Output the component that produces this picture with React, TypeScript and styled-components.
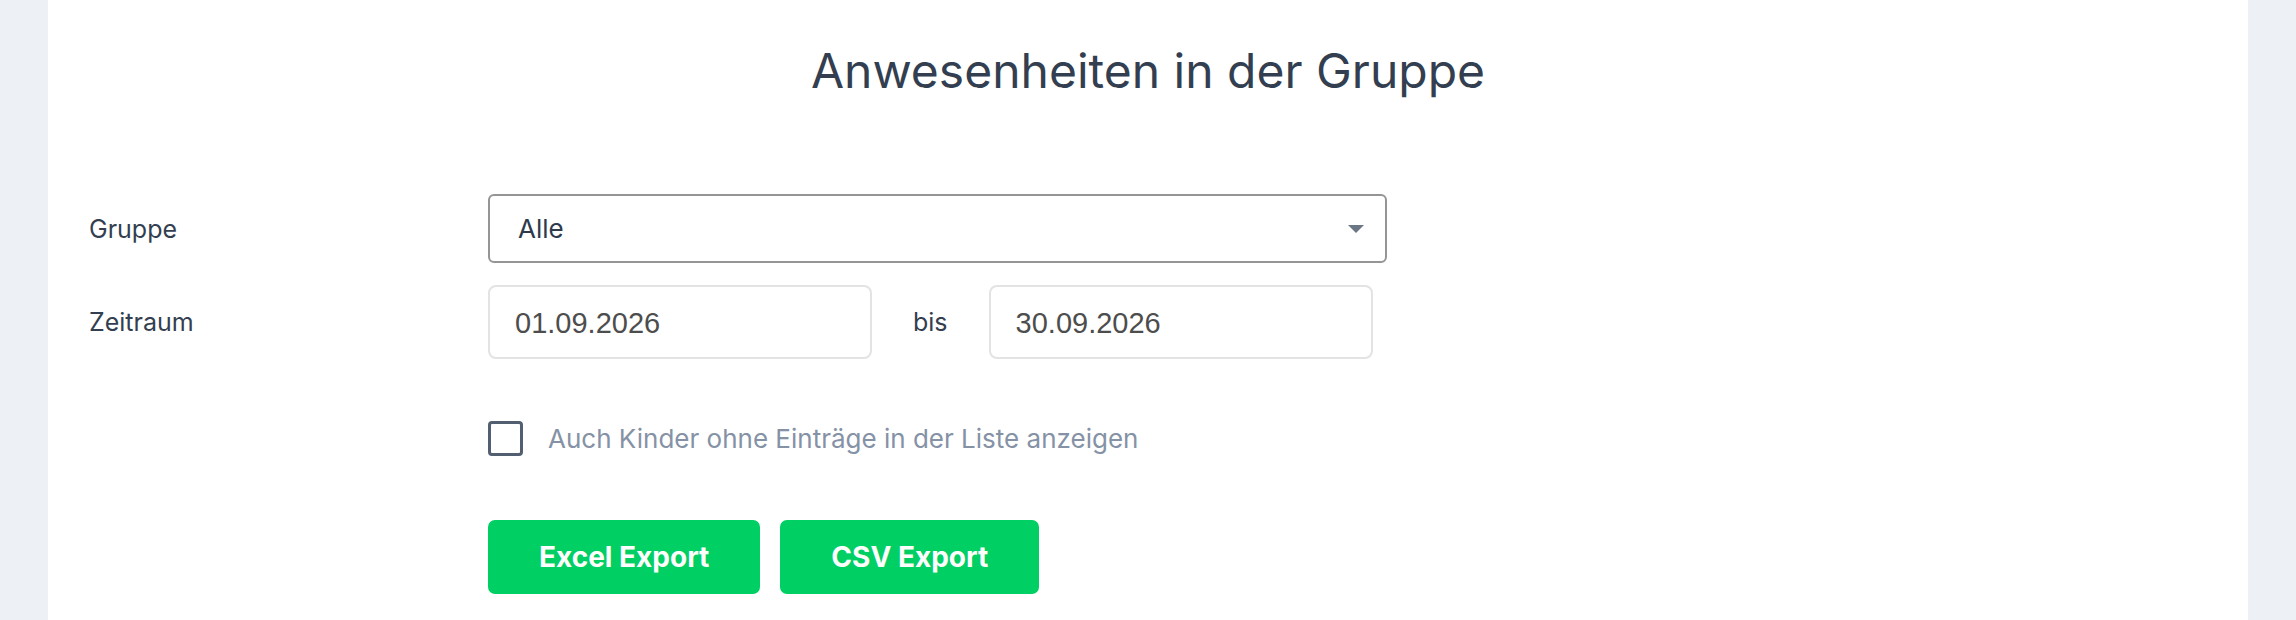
import React, { useState } from 'react';
import styled, { createGlobalStyle } from 'styled-components';

const GlobalStyle = createGlobalStyle`
  html, body {
    margin: 0;
    padding: 0;
    background: #edf0f5;
    font-family: 'Inter', 'Noto Sans', sans-serif;
    overflow: hidden;
  }
`;

const Page = styled.div`
  padding: 0 48px;
  height: 620px;
  overflow: hidden;
`;

const Card = styled.div`
  background: #ffffff;
  border-radius: 0 0 8px 8px;
  min-height: 700px;
  padding: 41px 41px 0;
  box-sizing: border-box;
`;

const Title = styled.h1`
  margin: 0 0 94px;
  text-align: center;
  font-size: 48px;
  font-weight: 400;
  color: #333f50;
  line-height: normal;
`;

const Form = styled.div`
  display: grid;
  grid-template-columns: 399px 1fr;
  align-items: center;
  row-gap: 22px;
`;

const Label = styled.div`
  font-size: 25px;
  color: #333f50;
`;

const SelectBox = styled.div`
  position: relative;
  width: 899px;
  height: 69px;
  box-sizing: border-box;
  border: 2px solid #959595;
  border-radius: 6px;
  display: flex;
  align-items: center;
  padding: 0 28px;
  font-size: 26px;
  color: #2d3a4d;
`;

const Caret = styled.span`
  position: absolute;
  right: 21px;
  top: 50%;
  margin-top: -4px;
  width: 0;
  height: 0;
  border-left: 8px solid transparent;
  border-right: 8px solid transparent;
  border-top: 8px solid #6b7785;
`;

const DateRow = styled.div`
  display: flex;
  align-items: center;
  gap: 41px;
`;

const DateInput = styled.input`
  width: 384px;
  height: 74px;
  box-sizing: border-box;
  border: 2px solid #e3e3e3;
  border-radius: 8px;
  padding: 2px 25px 0;
  font-family: 'Liberation Sans', Arial, sans-serif;
  font-size: 29px;
  color: #4d4d4d;
  outline: none;
  background: #fff;
`;

const Bis = styled.span`
  font-size: 25px;
  color: #333f50;
`;

const CheckRow = styled.label`
  display: flex;
  align-items: center;
  gap: 25px;
  margin-top: 40px;
  cursor: pointer;
`;

const Box = styled.span<{ $checked: boolean }>`
  width: 35px;
  height: 35px;
  box-sizing: border-box;
  border: 3px solid #525f70;
  border-radius: 4px;
  background: ${(p) => (p.$checked ? '#525f70' : '#fff')};
`;

const CheckText = styled.span`
  font-size: 26px;
  color: #8592a6;
`;

const Buttons = styled.div`
  display: flex;
  gap: 20px;
  margin-top: 42px;
`;

const ExportButton = styled.button`
  height: 74px;
  padding: 0 51px;
  border: none;
  border-radius: 7px;
  background: #00cf63;
  color: #ffffff;
  font-family: 'Inter', sans-serif;
  font-size: 28px;
  font-weight: 700;
  cursor: pointer;
`;

const App: React.FC = () => {
  const [showEmpty, setShowEmpty] = useState<boolean>(false);
  const [from, setFrom] = useState('01.09.2026');
  const [to, setTo] = useState('30.09.2026');

  return (
    <Page>
      <GlobalStyle />
      <Card>
        <Title>Anwesenheiten in der Gruppe</Title>
        <Form>
          <Label>Gruppe</Label>
          <SelectBox>
            Alle
            <Caret />
          </SelectBox>

          <Label>Zeitraum</Label>
          <DateRow>
            <DateInput value={from} onChange={(e) => setFrom(e.target.value)} />
            <Bis>bis</Bis>
            <DateInput value={to} onChange={(e) => setTo(e.target.value)} />
          </DateRow>

          <div />
          <CheckRow onClick={() => setShowEmpty(!showEmpty)}>
            <Box $checked={showEmpty} />
            <CheckText>Auch Kinder ohne Einträge in der Liste anzeigen</CheckText>
          </CheckRow>

          <div />
          <Buttons>
            <ExportButton>Excel Export</ExportButton>
            <ExportButton>CSV Export</ExportButton>
          </Buttons>
        </Form>
      </Card>
    </Page>
  );
};

export default App;
